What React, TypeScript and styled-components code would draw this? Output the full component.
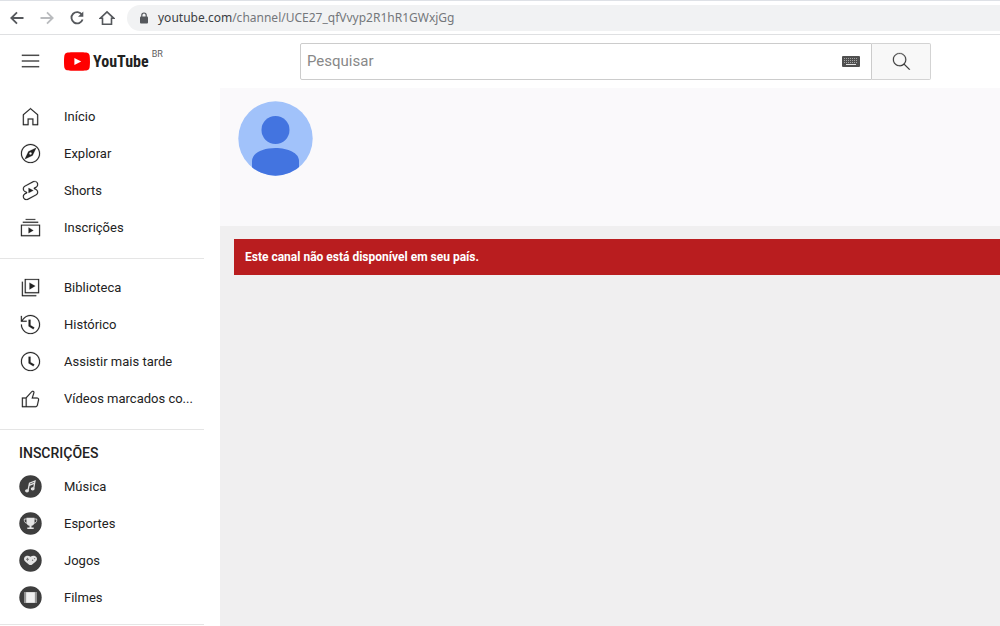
import React from 'react';
import styled, { createGlobalStyle } from 'styled-components';

const GlobalStyle = createGlobalStyle`
  *, *::before, *::after { box-sizing: border-box; }
  body { margin: 0; background: #fff; color: #030303; font-family: Roboto, "Liberation Sans", sans-serif; }
  html, body, #root { height: 100%; }
  svg { display: block; flex: none; }
`;

const Page = styled.div`
  display: flex;
  flex-direction: column;
  height: 100%;
  overflow: hidden;
`;

const BrowserBar = styled.div`
  flex: none;
  display: flex;
  align-items: center;
  height: 35px;
  padding-left: 2px;
  border-top: 1px solid #dee1e6;
  border-bottom: 1px solid #dfe0e2;
`;

const BrowserButton = styled.button<{ $faded?: boolean }>`
  display: flex;
  align-items: center;
  justify-content: center;
  width: 30px;
  height: 26px;
  padding: 0;
  border: 0;
  background: none;
  color: ${(p) => (p.$faded ? '#b9bbbe' : '#55585c')};
`;

const AddressBar = styled.div`
  flex: 1;
  display: flex;
  align-items: center;
  gap: 9px;
  height: 26px;
  margin-left: 5px;
  padding-left: 12px;
  border-radius: 13px 0 0 13px;
  background: #f1f2f3;
`;

const Address = styled.span`
  font: 12px/20px "Noto Sans", "Open Sans", sans-serif;
  color: #74777b;
`;

const Host = styled.span`
  color: #3c4043;
`;

const Masthead = styled.header`
  flex: none;
  display: flex;
  align-items: center;
  height: 53px;
  padding-left: 19px;
`;

const MenuButton = styled.button`
  padding: 0;
  border: 0;
  background: none;
  color: #222;
`;

const LogoLink = styled.a`
  display: flex;
  align-items: center;
  gap: 3px;
  width: 236px;
  margin-left: 22px;
  color: #212121;
  text-decoration: none;
`;

const Wordmark = styled.span`
  font: bold 16px/20px "Roboto Condensed", "Liberation Sans Narrow", "Liberation Sans", sans-serif;
`;

const Country = styled.span`
  height: 24px;
  font-size: 9px;
  line-height: 8px;
  color: #606060;
`;

const SearchForm = styled.form`
  flex: 1;
  display: flex;
  max-width: 631px;
  height: 37px;
  margin-right: 69px;
`;

const SearchField = styled.div`
  flex: 1;
  display: flex;
  align-items: center;
  padding: 0 11px 0 6px;
  border: 1px solid #ccc;
  border-radius: 2px 0 0 2px;
`;

const SearchInput = styled.input`
  flex: 1;
  min-width: 0;
  padding: 0 0 2px;
  border: 0;
  outline: 0;
  background: none;
  font: 15px/20px Roboto, "Liberation Sans", sans-serif;
  &::placeholder { color: #888; opacity: 1; }
`;

const SearchButton = styled.button`
  display: flex;
  align-items: center;
  justify-content: center;
  width: 59px;
  padding: 0;
  border: 1px solid #d3d3d3;
  border-left: 0;
  border-radius: 0 2px 2px 0;
  background: #f8f8f8;
  color: #333;
`;

const Body = styled.div`
  flex: 1;
  display: flex;
  min-height: 0;
`;

const Sidebar = styled.nav`
  flex: none;
  width: 220px;
  overflow: hidden;
`;

const Section = styled.section`
  width: 204px;
  padding: 10px 0 12px;
  border-bottom: 1px solid #e5e5e5;
  &:last-child { padding-bottom: 8px; }
`;

const SectionTitle = styled.h3`
  margin: 0;
  padding: 3px 19px 5px;
  font-size: 14px;
  line-height: 20px;
  font-weight: 500;
  color: #222;
`;

const NavLink = styled.a`
  display: flex;
  align-items: center;
  gap: 22px;
  height: 37px;
  padding: 0 10px 0 19px;
  font-size: 13px;
  line-height: 18px;
  color: #222;
  text-decoration: none;
`;

const NavLabel = styled.span`
  white-space: nowrap;
`;

const Content = styled.main`
  flex: 1;
  min-width: 0;
  background: #f0eff0;
`;

const ChannelHeader = styled.div`
  height: 138px;
  padding: 13px 18px;
  background: #faf9fb;
`;

const Alert = styled.div`
  margin: 13px 0 0 14px;
  padding: 8px 11px;
  background: #b91d1f;
  color: #fff;
  font-size: 12px;
  line-height: 20px;
  font-weight: 700;
`;

const ICONS = {
  menu: 'M21,6H3V5h18V6z M21,11H3v1h18V11z M21,17H3v1h18V17z',
  home: 'M12,4.33l7,6.12V20H15V14H9v6H5V10.45l7-6.12M12,3,4,10V21h6V15h4v6h6V10L12,3Z',
  explore:
    'M9.8,9.8l-3.83,8.23l8.23-3.83l3.83-8.23L9.8,9.8z M13.08,12.77c-0.21,0.29-0.51,0.48-0.86,0.54c-0.07,0.01-0.15,0.02-0.22,0.02c-0.28,0-0.54-0.08-0.77-0.25c-0.29-0.21-0.48-0.51-0.54-0.86c-0.06-0.35,0.02-0.71,0.23-0.99c0.21-0.29,0.51-0.48,0.86-0.54c0.35-0.06,0.7,0.02,0.99,0.23c0.29,0.21,0.48,0.51,0.54,0.86C13.37,12.13,13.29,12.48,13.08,12.77z M12,3c4.96,0,9,4.04,9,9s-4.04,9-9,9s-9-4.04-9-9S7.04,3,12,3 M12,2C6.48,2,2,6.48,2,12s4.48,10,10,10s10-4.48,10-10S17.52,2,12,2L12,2z',
  shorts:
    'M10 14.65v-5.3L15 12l-5 2.65zm7.77-4.33c-.77-.32-1.2-.5-1.2-.5L18 9.06c1.84-.96 2.53-3.23 1.56-5.06s-3.24-2.53-5.07-1.56L6 6.94c-1.29.68-2.07 2.04-2 3.49.07 1.42.93 2.67 2.22 3.25.03.01 1.2.5 1.2.5L6 14.93c-1.83.97-2.53 3.24-1.56 5.07.97 1.83 3.24 2.53 5.07 1.56l8.5-4.5c1.29-.68 2.06-2.04 1.99-3.49-.07-1.42-.94-2.68-2.23-3.25zm-.23 5.86l-8.5 4.5c-1.34.71-3.01.2-3.72-1.14-.71-1.34-.2-3.01 1.14-3.72l2.04-1.08v-1.21l-.69-.28-1.11-.46c-.99-.41-1.65-1.35-1.7-2.41-.05-1.06.52-2.06 1.46-2.56l8.5-4.5c1.34-.71 3.01-.2 3.72 1.14.71 1.34.2 3.01-1.14 3.72L15.5 9.26v1.21l1.8.74c.99.41 1.65 1.35 1.7 2.41.05 1.06-.52 2.06-1.46 2.56z',
  subscriptions: 'M10,18v-6l5,3L10,18z M17,3H7v1h10V3z M20,6H4v1h16V6z M22,9H2v12h20V9z M3,10h18v10H3V10z',
  library: 'M11,7l6,3.5L11,14V7L11,7z M18,20H4V6H3v15h15V20z M21,18H6V3h15V18z M7,17h13V4H7V17z',
  history:
    'M14.97,16.95L10,13.87V7h2v5.76l4.03,2.49L14.97,16.95z M22,12c0,5.51-4.49,10-10,10s-10-4.49-10-10h1c0,4.96,4.04,9,9,9s9-4.04,9-9s-4.04-9-9-9C8.81,3,5.92,4.64,4.28,7.38C4.17,7.56,4.06,7.75,3.97,7.94C3.96,7.96,3.95,7.98,3.94,8H8v1H1.96V3h1v4.74C3,7.65,3.03,7.57,3.07,7.49C3.18,7.27,3.3,7.07,3.42,6.86C5.22,3.86,8.51,2,12,2C17.51,2,22,6.49,22,12z',
  later:
    'M14.97,16.95L10,13.87V7h2v5.76l4.03,2.49L14.97,16.95z M12,3c-4.96,0-9,4.04-9,9s4.04,9,9,9s9-4.04,9-9S16.96,3,12,3 M12,2c5.52,0,10,4.48,10,10s-4.48,10-10,10S2,17.52,2,12S6.48,2,12,2L12,2z',
  like: 'M18.77,11h-4.23l1.52-4.94C16.38,5.03,15.54,4,14.38,4c-0.58,0-1.14,0.24-1.52,0.65L7,11H3v10h4h1h9.43c1.06,0,1.98-0.67,2.19-1.61l1.34-6C21.23,12.15,20.18,11,18.77,11z M7,20H4v-8h3V20z M19.98,13.17l-1.34,6C18.54,19.65,18.03,20,17.43,20H8v-8.61l5.6-6.06C13.79,5.12,14.08,5,14.38,5c0.26,0,0.5,0.11,0.63,0.3c0.07,0.1,0.15,0.26,0.09,0.47l-1.52,4.94L13.18,12h1.35h4.23c0.41,0,0.8,0.17,1.03,0.46C19.92,12.61,20.05,12.86,19.98,13.17z',
  search:
    'M20.87,20.17l-5.59-5.59C16.35,13.35,17,11.75,17,10c0-3.87-3.13-7-7-7s-7,3.13-7,7s3.13,7,7,7c1.75,0,3.35-0.65,4.58-1.71l5.59,5.59L20.87,20.17z M10,16c-3.31,0-6-2.69-6-6s2.69-6,6-6s6,2.69,6,6S13.31,16,10,16z',
};

const Icon = ({ name }: { name: keyof typeof ICONS }) => (
  <svg width="23" height="23" viewBox="0 0 24 24" fill="currentColor" stroke="currentColor" strokeWidth=".2" aria-hidden="true">
    <path d={ICONS[name]} />
  </svg>
);

const TOPICS = {
  music: (
    <g fill="none" stroke="#e4e4e4" strokeWidth="1.3">
      <path d="M9 15.500 10.500 8.200l5.500-2.200-1.300 7.500M10.200 10.300l5.400-2.200" />
      <ellipse cx="8" cy="15.800" rx="1.300" ry="1" fill="#e4e4e4" />
      <ellipse cx="13.700" cy="13.800" rx="1.300" ry="1" fill="#e4e4e4" />
    </g>
  ),
  sports: (
    <g fill="#e4e4e4">
      <path d="M7.500 5.800h8v4.400c0 2-1.400 3.300-3 3.600v1.800h2.200v1.400H8.300v-1.400h2.200v-1.800c-1.600-.3-3-1.600-3-3.600z" />
      <path d="M8 7H5.300v1.500c0 1.500 1.100 2.700 2.900 2.700M15 7h2.700v1.500c0 1.500-1.100 2.700-2.900 2.700" fill="none" stroke="#d0d0d0" />
    </g>
  ),
  games: (
    <g>
      <path
        d="M5.500 8.200c1.200-1.800 4-2 6-.5 2-1.500 4.800-1.300 6 .5 1 1.700.4 3.400-1 4.600l-3.300 2.600c-1 .8-2.400.8-3.400 0l-3.300-2.600c-1.400-1.200-2-2.900-1-4.600z"
        fill="#e4e4e4"
      />
      <path d="M7 10.300h3M8.500 8.800v3" stroke="#777" />
      <circle cx="13.600" cy="11.200" r=".7" fill="#777" />
      <circle cx="15.600" cy="9.600" r=".7" fill="#777" />
    </g>
  ),
  films: (
    <g>
      <path d="M5 6h13v11H5z" fill="#aaa" />
      <path d="M7.200 6.300h8.600v10.400H7.200z" fill="#f1f1f1" />
      <path d="M6 6.500v10.500M17 6.500v10.500" stroke="#5a5a5a" strokeDasharray="1 1" />
    </g>
  ),
};

const TopicIcon = ({ name }: { name: keyof typeof TOPICS }) => (
  <svg width="23" height="23" viewBox="0 0 23 23" aria-hidden="true">
    <circle cx="11.5" cy="11.5" r="11.2" fill="#3e3e3e" />
    {TOPICS[name]}
  </svg>
);

const NavItem = ({ icon, label }: { icon: React.ReactNode; label: string }) => (
  <NavLink href="#">
    {icon}
    <NavLabel>{label}</NavLabel>
  </NavLink>
);

const strokeProps = { fill: 'none', stroke: 'currentColor', strokeWidth: 1.8 };

export default function App() {
  return (
    <Page>
      <GlobalStyle />
      <BrowserBar>
        <BrowserButton aria-label="Voltar">
          <svg width="16" height="16" viewBox="0 0 16 16" {...strokeProps}>
            <path d="M14.500 8H2.500M8 2.300 2.300 8 8 13.700" />
          </svg>
        </BrowserButton>
        <BrowserButton aria-label="Avançar" $faded>
          <svg width="16" height="16" viewBox="0 0 16 16" {...strokeProps}>
            <path d="M1.500 8h12M8 2.300 13.700 8 8 13.700" />
          </svg>
        </BrowserButton>
        <BrowserButton aria-label="Recarregar">
          <svg width="16" height="16" viewBox="0 0 16 16" {...strokeProps}>
            <path d="M13 4.700A5.700 5.700 0 1 0 13.600 9.500" />
            <path d="M14.300 1.500v5.300H9z" fill="currentColor" stroke="none" />
          </svg>
        </BrowserButton>
        <BrowserButton aria-label="Página inicial">
          <svg width="16" height="16" viewBox="0 0 16 16" {...strokeProps} strokeWidth="1.600">
            <path d="M1.200 8.300 8 1.800l6.800 6.500H12.500v5.900h-9V8.300z" />
          </svg>
        </BrowserButton>
        <AddressBar>
          <svg width="10" height="12" viewBox="0 0 10 12" fill="none">
            <rect x="1" y="4.500" width="8" height="7" rx="1" fill="#55585c" />
            <path d="M2.800 5V3.200a2.200 2.200 0 0 1 4.400 0V5" stroke="#55585c" strokeWidth="1.200" />
          </svg>
          <Address>
            <Host>youtube.com</Host>/channel/UCE27_qfVvyp2R1hR1GWxjGg
          </Address>
        </AddressBar>
      </BrowserBar>

      <Masthead>
        <MenuButton aria-label="Guia">
          <Icon name="menu" />
        </MenuButton>
        <LogoLink href="#" aria-label="Página inicial do YouTube">
          <svg width="26" height="19" viewBox="0 0 26 19">
            <path
              d="M25.500 2.900A3.200 3.200 0 0 0 23.200.700C21.200.200 13 .200 13 .200S4.800.200 2.800.700A3.200 3.200 0 0 0 .500 2.900C0 5 0 9.500 0 9.500s0 4.500.500 6.600a3.200 3.200 0 0 0 2.300 2.200c2 .5 10.200.5 10.200.5s8.200 0 10.200-.5a3.200 3.200 0 0 0 2.300-2.200c.5-2.100.5-6.600.5-6.600s0-4.500-.5-6.600z"
              fill="#f00"
            />
            <path d="M10.400 6v7l6.800-3.500z" fill="#fff" />
          </svg>
          <Wordmark>YouTube</Wordmark>
          <Country>BR</Country>
        </LogoLink>
        <SearchForm role="search">
          <SearchField>
            <SearchInput type="text" placeholder="Pesquisar" aria-label="Pesquisar" />
            <svg width="18" height="11" viewBox="0 0 18 11">
              <rect width="18" height="11" rx="1" fill="#505050" />
              <path d="M2 2.500h14M2 4.500h14M2 6.500h14" stroke="#a4a4a4" strokeDasharray="1 1" />
              <path d="M4 8.500h10" stroke="#e4e4e4" />
            </svg>
          </SearchField>
          <SearchButton aria-label="Pesquisar">
            <Icon name="search" />
          </SearchButton>
        </SearchForm>
      </Masthead>

      <Body>
        <Sidebar>
          <Section>
            <NavItem icon={<Icon name="home" />} label="Início" />
            <NavItem icon={<Icon name="explore" />} label="Explorar" />
            <NavItem icon={<Icon name="shorts" />} label="Shorts" />
            <NavItem icon={<Icon name="subscriptions" />} label="Inscrições" />
          </Section>
          <Section>
            <NavItem icon={<Icon name="library" />} label="Biblioteca" />
            <NavItem icon={<Icon name="history" />} label="Histórico" />
            <NavItem icon={<Icon name="later" />} label="Assistir mais tarde" />
            <NavItem icon={<Icon name="like" />} label="Vídeos marcados co..." />
          </Section>
          <Section>
            <SectionTitle>INSCRIÇÕES</SectionTitle>
            <NavItem icon={<TopicIcon name="music" />} label="Música" />
            <NavItem icon={<TopicIcon name="sports" />} label="Esportes" />
            <NavItem icon={<TopicIcon name="games" />} label="Jogos" />
            <NavItem icon={<TopicIcon name="films" />} label="Filmes" />
          </Section>
        </Sidebar>
        <Content>
          <ChannelHeader>
            <svg width="75" height="75" viewBox="0 0 75 75" role="img" aria-label="Foto do canal">
              <defs>
                <clipPath id="avatar">
                  <circle cx="37.500" cy="37.500" r="37.200" />
                </clipPath>
              </defs>
              <g clipPath="url(#avatar)">
                <path d="M0 0h75v75H0z" fill="#a1c2fa" />
                <circle cx="37.500" cy="29" r="14" fill="#4374e0" />
                <path d="M14 75V60C14 52 25 47 37.500 47S61 52 61 60V75z" fill="#4374e0" />
              </g>
            </svg>
          </ChannelHeader>
          <Alert role="alert">Este canal não está disponível em seu país.</Alert>
        </Content>
      </Body>
    </Page>
  );
}
